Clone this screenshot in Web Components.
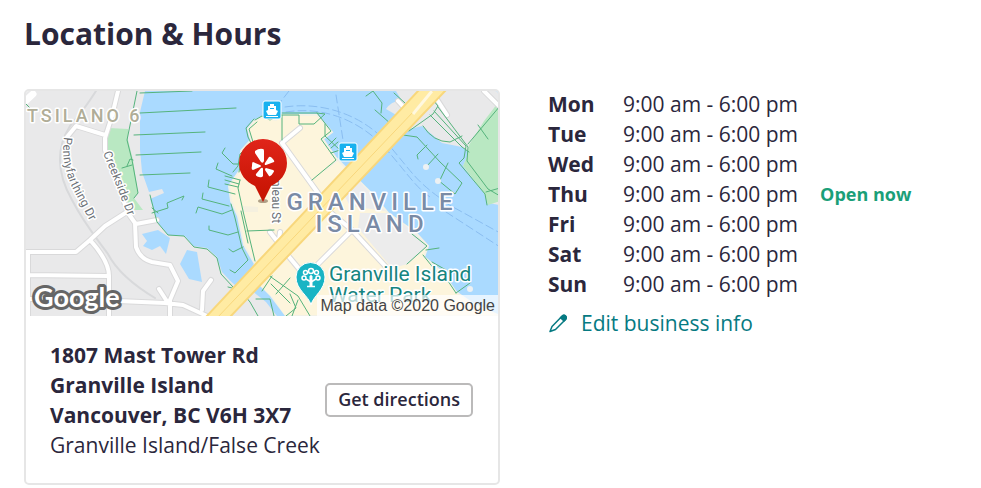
<!DOCTYPE html>
<html lang="en">
<head>
  <meta charset="utf-8">
  <meta name="viewport" content="width=device-width, initial-scale=1">
  <title>Location &amp; Hours</title>
  <style>
    body {
      margin: 0;
      background: #fff;
      color: #2b273c;
      font: 400 21px/30px "Open Sans", "Noto Sans", sans-serif;
    }
  </style>
</head>
<body>
  <location-section heading="Location &amp; Hours">
    <location-card slot="location">
      <location-map slot="map"></location-map>
      <strong>1807 Mast Tower Rd</strong>
      <strong>Granville Island</strong>
      <strong>Vancouver, BC V6H 3X7</strong>
      <span>Granville Island/False Creek</span>
      <outline-button slot="action">Get directions</outline-button>
    </location-card>
    <business-hours slot="hours" today="Thu" status="Open now"></business-hours>
    <edit-link slot="hours" href="#edit">Edit business info</edit-link>
  </location-section>

  <template id="map-template">
    <style>
      :host {
        display: block;
        position: relative;
        height: 225px;
        overflow: hidden;
        background: #e9e9ea;
      }

      svg {
        display: block;
        width: 100%;
        height: 100%;
      }

      text {
        paint-order: stroke;
        stroke: #fff;
        stroke-width: 3px;
        stroke-linejoin: round;
        font-family: Roboto, sans-serif;
        font-weight: 400;
      }

      .street {
        font-size: 12px;
        fill: #6d7278;
      }

      .area {
        font-weight: 500;
        fill: #b0ad97;
        font-size: 18px;
        letter-spacing: 3px;
      }

      .island {
        font-weight: 500;
        font-size: 24px;
        letter-spacing: 5px;
        fill: #7a8ba6;
        text-anchor: middle;
      }

      .poi {
        font-size: 21px;
        fill: #16857f;
      }

      .google {
        font-family: Lato, sans-serif;
        font-weight: 700;
        font-size: 27px;
        fill: #fff;
        stroke: #666;
        stroke-width: 6px;
      }

      .credit {
        position: absolute;
        right: 0;
        bottom: 0;
        padding: 0 3px;
        background: rgba(255, 255, 255, .7);
        color: #444;
        font: 400 16px/21px "Liberation Sans", Arial, sans-serif;
      }
    </style>
    <svg viewBox="26 91 472 225" preserveAspectRatio="xMidYMid slice" role="img" aria-label="Map of Granville Island">
      <!-- water -->
      <path fill="#aadaff" d="M145 91 140 112 140 150 142 172 149 192 162 189 164 193 150 199 153 208 158 223 168 235 185 236 193 246 207 248 217 257 222 272 235 286 260 290 500 316V91Z"/>
      <!-- south bank and island -->
      <path fill="#e9e9ea" d="M224 276 235 285 256 284 267 298 280 316H190Z"/>
      <path fill="#aadaff" d="M142 234 158 230 170 238 166 254 160 246 152 250 143 246 147 241ZM187 250 197 252 200 270 202 282 189 279 180 264Z"/>
      <path fill="#fdf5dc" stroke="#f3f1e6" stroke-width="2" d="M254 121 248 129 251 140 241 151 240 170 229 186 231 201 238 216 244 245 255 264 243 283 260 287 272 298 284 316H500L475 305 456 292 442 272 424 257 428 246 416 233 388 213 370 192 355 177 336 158 323 139 332 132 317 115 281 115 276 120 262 117Z"/>
      <path fill="#aadaff" d="M246 286 260 286 270 296 285 316H277L266 302Z"/>
      <path fill="#ececec" d="M360 213 388 213 415 233 427 247 408 264 392 268 358 228ZM323 173 350 150 340 157 328 168ZM343 193 356 177 385 211 350 206Z"/>
      <path fill="#f5f0df" d="M243 206 258 207 258 212 242 212Z"/>
      <!-- north east shore -->
      <path fill="#e9e9ea" d="M386 109Q392 100 402 101L396 91H500V205L488 203 484 193 463 166 469 152 462 147 442 143 422 126 410 129 398 116Z"/>
      <path fill="#b9e8c2" d="M500 100 484 121 469 145 468 154 463 166 484 193 488 205 500 201ZM109 128 128 129 128 140 133 160 138 193 134 198 143 210 130 210 124 190 113 164 106 148Z"/>
      <!-- roads -->
      <g fill="none" stroke-linejoin="round" stroke-linecap="round">
        <path stroke="#d8d9db" stroke-width="2" d="M96 91Q84 110 70 126C58 145 55 170 72 200 85 225 98 240 108 254Q120 277 155 298M20 106 33 91"/>
        <g stroke="#d9d9da" stroke-width="6">
          <path id="streets" d="M118 91 112 116 105 138 105 150 118 185 128 213 135 223 136 247 Q140 259 152 262L170 265 178 281 170 300 170 320M105 135 76 126 67 137M26 252 76 252 90 240 105 226 130 210M90 240Q109 261 109 276L109 320M28 252V320M28 275 108 276M28 299 45 299M118 301 165 303 183 305 207 316M159 289 168 303M202 310 203 291 211 280M136 224 157 220M282 143 318 193 312 199M300 128 283 142M270 232 290 258 300 270M280 232 277 255M330 212 352 230 387 268M350 232 318 264M398 101 409 113M436 98 447 115M484 91 500 107"/>
        </g>
        <use href="#streets" stroke="#fff" stroke-width="4"/>
        <path stroke="#fff" stroke-width="7" d="M20 106 33 94"/>
        <!-- ferry routes -->
        <path stroke="#8abdf0" stroke-width="1" stroke-dasharray="8 4" d="M285 107C325 101 365 117 388 144S415 180 440 198M286 112C330 105 365 126 385 148S415 187 430 197M289 91 278 105M336 95 343 140M444 202 500 233M446 212 500 247"/>
        <!-- piers and shoreline paths -->
        <path stroke="#55b37c" stroke-width="1" d="M137 91 127 140 132 160 138 193 134 198M26 104 32 110M140 93 192 91M140 113 236 108M134 135 205 132M136 155 201 152M140 175 190 173M122 168 132 165M127 166 130 159 133 160M150 195 157 222 168 235 184 236 194 247 207 249 217 258 221 274 233 287M152 213 168 208 167 203 184 196 182 200M152 208 158 213M196 213 198 207 222 214 232 210M209 226 209 230 228 235 238 232M229 249 233 252 243 247M230 270 235 273 248 260 242 248 235 218 231 204M254 119 246 128 248 137 251 143 240 154 238 166 233 172M257 122 249 129 253 142 242 155 239 172M225 148 222 153 233 164 240 164M218 163 216 169 232 176M209 180 208 187 235 194M203 193 202 199 229 206M225 176 240 180M225 180 239 184M225 184 238 187M240 180 238 188 243 211 255 261M241 211 248 243M247 231 274 230M255 120 262 116 270 120 280 115 299 115 299 124 314 124 325 114 317 113 282 113M282 115V140M317 113 331 131 321 139 336 160 312 180M325 124 325 136 340 150 331 153M329 145 336 138M331 148 338 142M366 96 373 91 382 103 381 113M375 110 391 124M394 93 405 103M403 135 417 137 440 162 462 183 455 194 438 180M427 145 417 155 418 159M438 154 427 166M448 163 440 180M409 131 433 114 438 106 433 100M423 126Q433 142 450 142L462 136M430 115 462 147 469 152M434 111 466 146 464 158 459 163 485 194 487 205M438 107 468 147 467 161 488 189 500 196M468 144 500 106M478 125 488 139M486 192 500 188M412 234 427 246 407 264M423 255 435 270 448 281 456 293M426 250 439 248M432 262 446 270M456 293 470 283M261 270 298 296 310 316M272 276 262 291M290 278 276 294M271 284 290 303M256 299 270 299 274 316M290 294 296 308 286 316M228 287 240 290 250 302 258 316M298 300 292 316"/>
      </g>
      <g fill="#edf1f3">
        <circle cx="426" cy="167" r="3"/><circle cx="438" cy="181" r="3"/><circle cx="470" cy="289" r="3"/>
      </g>
      <!-- bridge -->
      <path fill="#ffeba3" stroke="#f8d77c" stroke-width="2" d="M205 318 419 90H446L229 318Z"/>
      <path fill="none" stroke="#f8d77c" stroke-width="1" d="M217 318 434 90"/>
      <path fill="none" stroke="#fff8df" stroke-width="3" d="M413 114 432 91"/>
      <!-- street and area names -->
      <path id="penny" fill="none" d="M64 137Q60 164 74 191L100 240"/>
      <path id="creek" fill="none" d="M103 153 118 190 134 232"/>
      <text class="street"><textPath href="#penny">Pennyfarthing Dr</textPath></text>
      <text class="street"><textPath href="#creek">Creekside Dr</textPath></text>
      <text class="street" transform="translate(272 180) rotate(90)">nleau St</text>
      <text class="area" x="27" y="122">TSILANO 6</text>
      <text class="island" x="372" y="210">GRANVILLE</text>
      <text class="island" x="372" y="232">ISLAND</text>
      <text class="poi" x="329" y="281">Granville Island</text>
      <text class="poi" x="329" y="302">Water Park</text>
      <!-- ferry stops -->
      <g id="ferry">
        <rect x="263" y="101" width="18" height="18" rx="2" fill="#18b1ef" stroke="#fff"/>
        <path fill="#fff" d="M270 104h4v2h2v4l2 1-2 4h-8l-2-4 2-1v-4h2ZM266 116h12v1h-12Z"/>
        <path stroke="#18b1ef" d="M270 108.500h4"/>
      </g>
      <use href="#ferry" x="76" y="42"/>
      <!-- water park marker -->
      <path fill="#18b4c4" stroke="#fff" d="M311 305C309 296 296 290 296 277A14.500 14.500 0 0 1 325 277C325 290 313 296 311 305Z"/>
      <g fill="none" stroke="#fff" stroke-width="1.500">
        <path d="M307 286.500h8M311 286v-11M311 282l-5-3M311 282l5-3"/>
        <circle cx="311" cy="271" r="2.500"/><circle cx="305.500" cy="272.500" r="2"/><circle cx="316.500" cy="272.500" r="2"/><circle cx="304" cy="278" r="2"/><circle cx="318" cy="278" r="2"/>
      </g>
      <path stroke="#fff" stroke-width="3" d="M311 276v11"/>
      <!-- business marker -->
      <defs>
        <linearGradient id="red" x2="0" y2="1">
          <stop stop-color="#e0251a"/>
          <stop offset="1" stop-color="#c41200"/>
        </linearGradient>
      </defs>
      <ellipse cx="263" cy="201" rx="5" ry="2" fill="#9c8b70" opacity=".8"/>
      <path fill="url(#red)" d="M263 202 255 186C246 182 239 174 239 163A24 24 0 0 1 287 163C287 174 280 182 271 186Z"/>
      <g fill="#fff">
        <path d="M255 151q4-3 8-2 1 0 1 2v10q-1 3-3 1l-6-9Z"/>
        <path d="M253 162l7 3q2 1 0 2l-7 3q-2 0-1-4 0-4 1-4Z"/>
        <path d="M263 169v7q-1 2-4 1-4-1-3-3l5-6q2-1 2 1Z"/>
        <path d="M266 168l7 2q2 1 0 3-2 4-4 3l-4-6q0-2 1-2Z"/>
        <path d="M265 163l4-6q1-1 3 1 3 3 2 4l-8 3q-2 0-1-2Z"/>
      </g>
      <text class="google" x="34" y="307">Google</text>
    </svg>
    <span class="credit">Map data ©2020 Google</span>
  </template>

  <script>
    class LocationSection extends HTMLElement {
      connectedCallback() {
        const shadowRoot = this.attachShadow({mode: 'open'});
        shadowRoot.innerHTML = `
          <style>
            :host {
              display: block;
              padding: 14px 24px 0;
            }

            h2 {
              margin: 0 0 35px;
              font-size: 30px;
              line-height: 40px;
              font-weight: 700;
            }

            .columns {
              display: grid;
              grid-template-columns: minmax(0, 476px) minmax(0, 1fr);
              align-items: start;
              gap: 48px;
            }

            @media (max-width: 760px) {
              .columns {
                grid-template-columns: 1fr;
              }
            }
          </style>
          <h2>${this.getAttribute('heading')}</h2>
          <div class="columns">
            <slot name="location"></slot>
            <div><slot name="hours"></slot></div>
          </div>
        `;
      }
    }
    customElements.define('location-section', LocationSection);

    class LocationCard extends HTMLElement {
      connectedCallback() {
        const shadowRoot = this.attachShadow({mode: 'open'});
        shadowRoot.innerHTML = `
          <style>
            :host {
              display: block;
              border: 2px solid #e6e6e6;
              border-radius: 5px;
              overflow: hidden;
            }

            .body {
              display: flex;
              align-items: center;
              justify-content: space-between;
              padding: 24px 25px 23px 24px;
            }

            address {
              display: flex;
              flex-direction: column;
              font-style: normal;
              white-space: nowrap;
            }

            ::slotted(strong) {
              font-weight: 700;
            }
          </style>
          <slot name="map"></slot>
          <div class="body">
            <address><slot></slot></address>
            <slot name="action"></slot>
          </div>
        `;
      }
    }
    customElements.define('location-card', LocationCard);

    class LocationMap extends HTMLElement {
      connectedCallback() {
        const template = document.getElementById('map-template');
        this.attachShadow({mode: 'open'}).appendChild(template.content.cloneNode(true));
      }
    }
    customElements.define('location-map', LocationMap);

    class OutlineButton extends HTMLElement {
      connectedCallback() {
        const shadowRoot = this.attachShadow({mode: 'open'});
        shadowRoot.innerHTML = `
          <style>
            :host {
              display: block;
            }

            button {
              display: block;
              padding: 1px 11px 3px;
              border: 2px solid #bbbaba;
              border-radius: 5px;
              background: #fff;
              color: inherit;
              font: 600 18px/26px "Open Sans", "Noto Sans", sans-serif;
              white-space: nowrap;
              cursor: pointer;
            }
          </style>
          <button type="button"><slot></slot></button>
        `;
      }
    }
    customElements.define('outline-button', OutlineButton);

    class BusinessHours extends HTMLElement {
      connectedCallback() {
        let rows = '';
        ['Mon', 'Tue', 'Wed', 'Thu', 'Fri', 'Sat', 'Sun'].forEach(day => {
          const status = day === this.getAttribute('today') ? this.getAttribute('status') : '';
          rows += `
            <tr>
              <th scope="row">${day}</th>
              <td>9:00 am - 6:00 pm</td>
              <td class="status">${status}</td>
            </tr>
          `;
        });

        const shadowRoot = this.attachShadow({mode: 'open'});
        shadowRoot.innerHTML = `
          <style>
            :host {
              display: block;
            }

            table {
              border-collapse: collapse;
              white-space: nowrap;
            }

            th, td {
              height: 30px;
              padding: 0 22px 0 0;
              text-align: left;
            }

            th {
              width: 53px;
              font-weight: 700;
            }

            .status {
              padding: 0;
              color: #1a9f78;
              font-size: 18px;
              font-weight: 700;
            }
          </style>
          <table><tbody>${rows}</tbody></table>
        `;
      }
    }
    customElements.define('business-hours', BusinessHours);

    class EditLink extends HTMLElement {
      connectedCallback() {
        const shadowRoot = this.attachShadow({mode: 'open'});
        shadowRoot.innerHTML = `
          <style>
            :host {
              display: block;
              margin-top: 9px;
            }

            a {
              display: inline-flex;
              align-items: center;
              gap: 11px;
              color: #067a82;
              text-decoration: none;
            }
          </style>
          <a href="${this.getAttribute('href')}">
            <svg width="22" height="22" viewBox="0 0 22 22" fill="none" stroke="currentColor" stroke-width="1.500" stroke-linejoin="round" aria-hidden="true">
              <path d="M2 19.500 4 14.500 14 4.200Q16 2.500 17.500 4T17.500 7.500L7.500 17.500Z"/>
              <path fill="currentColor" d="M12.500 5.800 14 4.200Q16 2.500 17.500 4T17.500 7.500L16 9Z"/>
            </svg>
            <slot></slot>
          </a>
        `;
      }
    }
    customElements.define('edit-link', EditLink);
  </script>
</body>
</html>
